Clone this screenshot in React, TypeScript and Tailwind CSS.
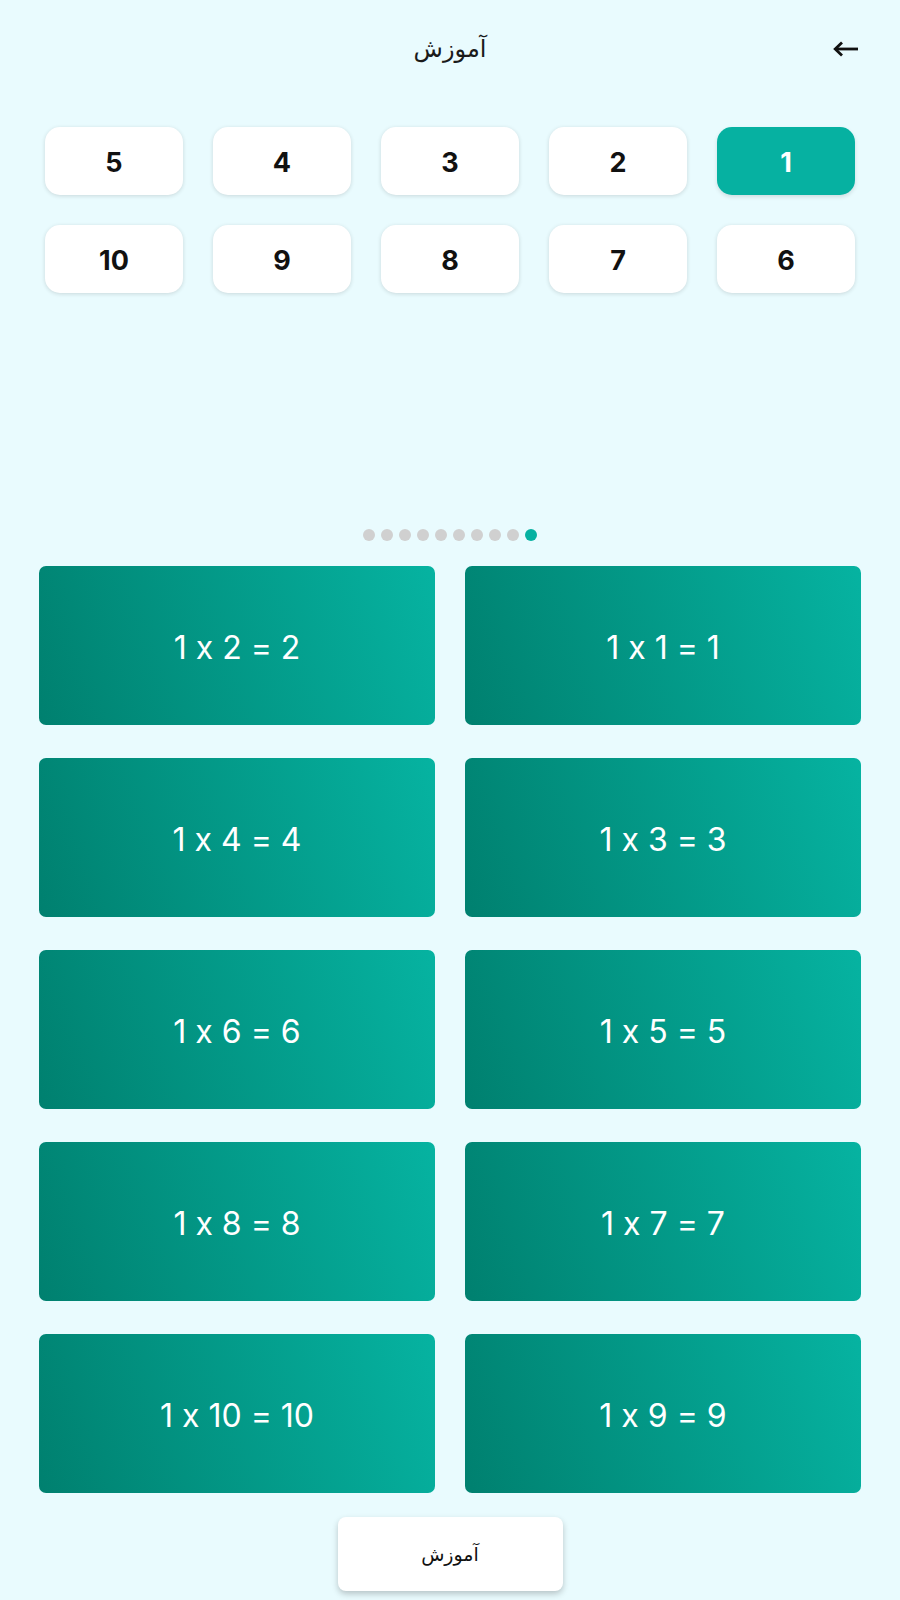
import React, { useState } from 'react'

const tables = [1, 2, 3, 4, 5, 6, 7, 8, 9, 10]

function BackArrow() {
  return (
    <svg width="26" height="16" viewBox="0 0 26 16" fill="none">
      <path d="M25 8H3" stroke="#111" strokeWidth="2.8" />
      <path d="M9 1.5L2.2 8L9 14.5" stroke="#111" strokeWidth="2.8" strokeLinejoin="miter" />
    </svg>
  )
}

export default function App() {
  const [active, setActive] = useState(1)

  return (
    <div
      dir="rtl"
      className="min-h-[1600px] w-[900px] bg-[#e9fbfe] flex flex-col"
      style={{ fontFamily: 'Inter, "DejaVu Sans", sans-serif', fontFeatureSettings: '"calt" 0' }}
    >
      {/* Header */}
      <div className="relative h-[96px] flex items-center justify-center">
        <h1 className="text-[24px] text-[#1a1a1a] font-['DejaVu_Sans',sans-serif] mt-[2px]">آموزش</h1>
        <button className="absolute left-[833px] top-[41px]">
          <BackArrow />
        </button>
      </div>

      {/* Table selector */}
      <div className="px-[45px] pt-[31px] grid grid-cols-5 gap-x-[30px] gap-y-[30px]">
        {tables.map((n) => (
          <button
            key={n}
            onClick={() => setActive(n)}
            className={
              n === active
                ? 'h-[68px] pt-[4px] rounded-[15px] bg-[#06b1a1] text-white text-[27px] font-bold shadow-[0_2px_4px_rgba(0,0,0,0.12)]'
                : 'h-[68px] pt-[4px] rounded-[15px] bg-white text-[#111] text-[27px] font-bold shadow-[0_1px_4px_rgba(0,0,0,0.14)]'
            }
          >
            {n}
          </button>
        ))}
      </div>

      {/* Pager dots */}
      <div className="mt-[236px] flex justify-center gap-[6px]">
        {tables.map((n) => (
          <span
            key={n}
            className={n === active ? 'w-[12px] h-[12px] rounded-full bg-[#06b1a1]' : 'w-[12px] h-[12px] rounded-full bg-[#d0d0d0]'}
          />
        ))}
      </div>

      {/* Multiplication cards */}
      <div className="mt-[25px] px-[39px] grid grid-cols-2 gap-x-[30px] gap-y-[33px]">
        {tables.map((m) => (
          <div
            key={m}
            dir="ltr"
            className="h-[159px] pt-[4px] rounded-[7px] bg-linear-[72deg] from-[#00806f] to-[#06b3a1] flex items-center justify-center text-white text-[32px]"
          >
            {active} x {m} = {active * m}
          </div>
        ))}
      </div>

      {/* Bottom button */}
      <div className="mt-[24px] flex justify-center">
        <button className="w-[225px] h-[74px] rounded-[8px] bg-white shadow-[0_3px_6px_rgba(0,0,0,0.22)] text-[19px] text-[#111] font-['DejaVu_Sans',sans-serif]">
          آموزش
        </button>
      </div>
    </div>
  )
}
